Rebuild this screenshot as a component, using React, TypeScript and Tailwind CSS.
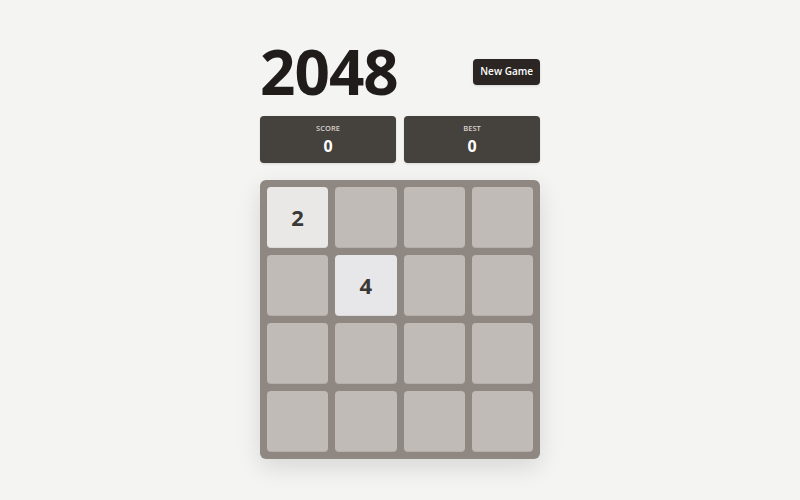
import React from 'react';

const board = [
  [2, 0, 0, 0],
  [0, 4, 0, 0],
  [0, 0, 0, 0],
  [0, 0, 0, 0],
];

const tileClass = (v: number) => {
  if (v === 2) return 'bg-[#eae8e6] text-[#3b3936]';
  if (v === 4) return 'bg-[#e7e6e9] text-[#3b3936]';
  return 'bg-[#c1bbb7]';
};

export default function App() {
  return (
    <div className="min-h-screen w-full bg-[#f4f4f2] flex justify-center" style={{ fontFamily: '"Open Sans", "Liberation Sans", sans-serif' }}>
      <div className="w-[280px] pt-[37px]">
        <div className="flex items-center justify-between">
          <h1 className="text-[62px] font-bold leading-none tracking-[-1px] text-[#1f1c1a] pt-[3px]">2048</h1>
          <button className="mt-[4px] h-[26px] px-[7px] rounded-[4px] bg-[#2b2523] text-white text-[10px] font-semibold shadow-sm">
            New Game
          </button>
        </div>

        <div className="mt-[14px] grid grid-cols-2 gap-[8px]">
          {['SCORE', 'BEST'].map((label) => (
            <div key={label} className="h-[47px] rounded-[4px] bg-[#45413c] flex flex-col items-center justify-center text-white shadow-sm">
              <span className="text-[7.5px] font-semibold text-[#d8d3ce] leading-none">{label}</span>
              <span className="text-[16px] font-bold leading-none mt-[5px]">0</span>
            </div>
          ))}
        </div>

        <div className="mt-[17px] rounded-[6px] bg-[#8f8782] p-[7px] grid grid-cols-4 gap-[7px] shadow-[0_8px_24px_rgba(0,0,0,0.12)]">
          {board.flat().map((v, i) => (
            <div
              key={i}
              className={`h-[61px] rounded-[4px] flex items-center justify-center text-[22px] font-bold shadow-[inset_0_-1px_0_rgba(0,0,0,0.06)] ${tileClass(v)}`}
            >
              {v !== 0 ? v : ''}
            </div>
          ))}
        </div>
      </div>
    </div>
  );
}
